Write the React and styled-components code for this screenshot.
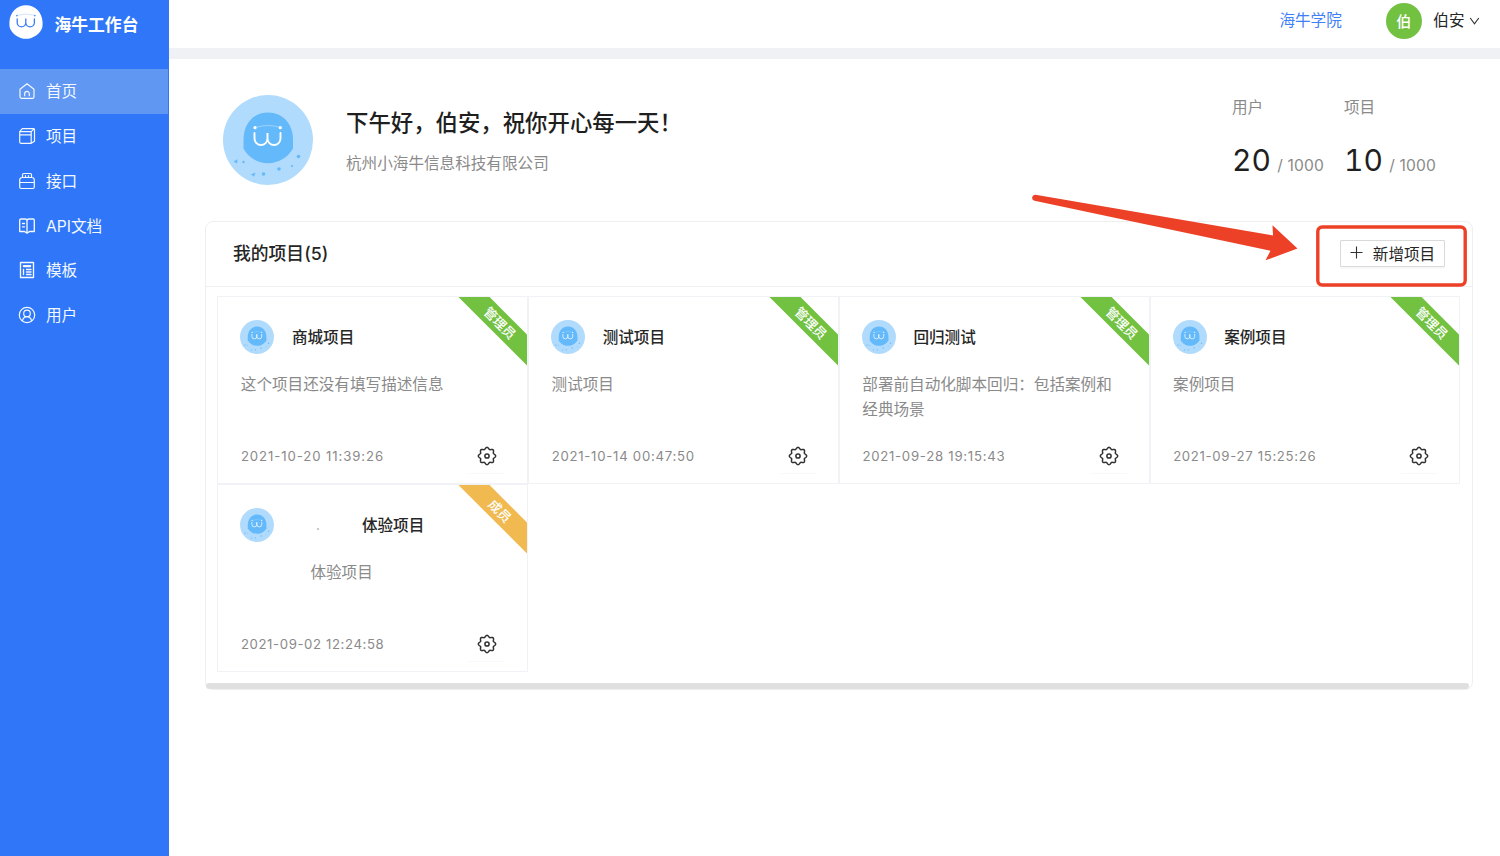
import React from 'react';
import styled, { createGlobalStyle } from 'styled-components';

const GlobalStyle = createGlobalStyle`
  * { box-sizing: border-box; }
  html, body { margin: 0; padding: 0; background: #fff; }
  body {
    font-family: Inter, "Noto Sans CJK SC", sans-serif;
    font-size: 15.6px;
    color: #262626;
    overflow: hidden;
  }
`;

const Page = styled.div`
  position: relative;
  display: flex;
  width: 1500px;
  height: 856px;
  overflow: hidden;
`;

const Sidebar = styled.aside`
  width: 169px;
  flex: none;
  background: #2f77f8;
  color: #fff;
`;

const Brand = styled.div`
  height: 69px;
  padding: 5px 0 0 8.5px;
  display: flex;
  align-items: flex-start;
`;

const BrandName = styled.div`
  margin-left: 12px;
  font-size: 16.8px;
  font-weight: 700;
  line-height: 40px;
  white-space: nowrap;
`;

const NavItem = styled.div`
  height: 44.75px;
  width: 168px;
  display: flex;
  align-items: center;
  gap: 10px;
  padding: 0 0 0 18px;
  line-height: 24px;
  background: ${(p) => (p.$active ? '#5f97f3' : 'transparent')};
  color: #f4f8ff;
  svg { flex: none; }
  span { padding-top: 2px; }
`;

const Main = styled.main`
  flex: 1;
  display: flex;
  flex-direction: column;
`;

const TopBar = styled.header`
  height: 59px;
  border-bottom: 11px solid #f0f1f5;
  display: flex;
  justify-content: flex-end;
  align-items: flex-start;
  padding-right: 20.5px;
  line-height: 42px;
`;

const AcademyLink = styled.a`
  color: #3f80f7;
  margin-right: 44px;
`;

const UserBadge = styled.div`
  width: 36px;
  height: 36px;
  margin: 3px 11.5px 0 0;
  border-radius: 50%;
  background: #72c141;
  color: #fff;
  font-size: 15px;
  font-weight: 500;
  line-height: 37px;
  text-align: center;
`;

const UserName = styled.div`
  display: flex;
  align-items: center;
  gap: 4px;
`;

const Welcome = styled.section`
  height: 162px;
  display: flex;
  padding: 36px 63px 0 53.5px;
`;

const Greeting = styled.div`
  flex: 1;
  margin-left: 33.5px;
`;

const Hello = styled.h1`
  margin: 11px 0 0;
  font-size: 22.4px;
  font-weight: 500;
  line-height: 34px;
  color: #1f1f1f;
`;

const Company = styled.p`
  margin: 12px 0 0;
  line-height: 24px;
  color: #8a8a8a;
`;

const Stat = styled.div`
  margin-left: ${(p) => p.$gap || 0}px;
  width: 93px;
  color: #8a8a8a;
  white-space: nowrap;
`;

const StatLabel = styled.div`
  padding-top: 1px;
  line-height: 24px;
`;

const StatValue = styled.div`
  margin-top: 20px;
  line-height: 40px;
  letter-spacing: 0.15px;
  b {
    font-size: 30px;
    font-weight: 400;
    font-variant-numeric: tabular-nums;
    color: #1f1f1f;
    margin-right: 6px;
  }
`;

const Panel = styled.section`
  width: 1268px;
  height: 469px;
  margin-left: 36px;
  border: 1px solid #efeff1;
  border-radius: 8px;
  display: flex;
  flex-direction: column;
`;

const PanelHead = styled.div`
  height: 65px;
  flex: none;
  display: flex;
  justify-content: space-between;
  align-items: center;
  padding: 0 27px 3px;
  border-bottom: 1px solid #efeff1;
`;

const PanelTitle = styled.h2`
  margin: 0 0 2px;
  font-size: 17.8px;
  font-weight: 500;
`;

const AddButton = styled.button`
  width: 105px;
  height: 27px;
  margin-top: 2px;
  padding: 0;
  border: 1px solid #d9d9d9;
  border-radius: 1px;
  background: #fff;
  box-shadow: 0 2px 1px rgba(0, 0, 0, 0.03);
  font: inherit;
  line-height: 24px;
  color: #262626;
  display: flex;
  align-items: center;
  justify-content: center;
  gap: 10px;
  white-space: nowrap;
  svg { margin-bottom: 2px; }
  span { padding-top: 2px; }
`;

const CardGrid = styled.div`
  flex: 1;
  display: grid;
  grid-template-columns: repeat(4, 310.75px);
  grid-auto-rows: 188px;
  padding: 9px 0 0 11.4px;
`;

const Card = styled.article`
  position: relative;
  overflow: hidden;
  border: 1px solid #f0f2f5;
  padding: 22px 22px 0;
  display: flex;
  flex-direction: column;
`;

const CardHead = styled.div`
  display: flex;
  align-items: center;
  height: 36px;
`;

const CardTitle = styled.h3`
  margin: 0 0 0 ${(p) => (p.$shift ? 42.5 : 17.5)}px;
  padding-top: 2px;
  font-size: 15.6px;
  font-weight: 500;
  line-height: 24px;
`;

const Speck = styled.span`
  width: 2px;
  height: 2px;
  margin: 8px 0 0 43px;
  background: #c9c9c9;
`;

const CardText = styled.p`
  margin: 18px 0 0;
  padding-left: ${(p) => (p.$shift ? 70 : 0.4)}px;
  height: 50px;
  width: 256px;
  line-height: 24.5px;
  color: #8a8a8a;
`;

const CardFoot = styled.div`
  margin-top: 16px;
  height: 36px;
  display: flex;
  justify-content: space-between;
  color: #8a8a8a;
`;

const Time = styled.time`
  padding-left: 0.5px;
  font-size: 13.2px;
  letter-spacing: ${(p) => p.$track}px;
  line-height: 35px;
`;

const Settings = styled.div`
  width: 36px;
  height: 35px;
  padding-bottom: 1px;
  border-bottom: 1px solid #f8f8f8;
  display: flex;
  align-items: center;
  justify-content: center;
`;

const Ribbon = styled.div`
  position: absolute;
  top: 15px;
  right: -33px;
  width: 120px;
  height: 22px;
  transform: rotate(45deg);
  background: ${(p) => (p.$member ? '#f1ba50' : '#72c141')};
  color: #fff;
  font-size: 13px;
  font-weight: 500;
  line-height: 22px;
  text-align: center;
`;

const ScrollBar = styled.div`
  height: 6px;
  width: 1263px;
  flex: none;
  border-radius: 3px;
  background: #e0e0e0;
`;

const Annotation = styled.svg`
  position: absolute;
  left: 1020px;
  top: 180px;
  pointer-events: none;
`;

const Stroke = ({ children, size = 18 }) => (
  <svg width={size} height={size} viewBox="0 0 18 18" fill="none" stroke="currentColor" strokeWidth="1.2" strokeLinejoin="round" strokeLinecap="round">
    {children}
  </svg>
);

const icons = {
  home: (
    <Stroke>
      <path d="M2 7.200 9 1.800l7 5.400v7.600a1.600 1.600 0 0 1-1.600 1.600H3.600A1.600 1.600 0 0 1 2 14.800zM6.700 13.700v-2a2.300 2.300 0 0 1 4.600 0v2" />
    </Stroke>
  ),
  project: (
    <Stroke>
      <path d="M1.700 4.600h11.500v11.700H2.900a1.200 1.200 0 0 1-1.200-1.200zM1.700 4.600l2.600-2.900h11.100a1.100 1.100 0 0 1 1.100 1.100v11.400l-3.300 2.100M13.200 4.600l2.900-2.700M1.700 7.800h11.500" />
    </Stroke>
  ),
  api: (
    <Stroke>
      <path d="M4.200 5.500h9.600a2.500 2.500 0 0 1 2.500 2.500v7a1.500 1.500 0 0 1-1.500 1.500H3.200A1.500 1.500 0 0 1 1.700 15V8a2.500 2.500 0 0 1 2.500-2.500zM1.700 10.500h14.600M4.500 5.500V2.800a1.300 1.300 0 0 1 1.300-1.300h6.400a1.300 1.300 0 0 1 1.300 1.300v2.700M7.500 3.500v2M10.500 3.500v2" />
    </Stroke>
  ),
  docs: (
    <Stroke>
      <path d="M9 4v10.500M9 4c0-1.300-.8-2-1.800-2H2.900a1.200 1.200 0 0 0-1.200 1.200v11.300H6.500l2.500 1.600 2.500-1.600h4.800V3.200A1.200 1.200 0 0 0 15.100 2h-4.300C9.800 2 9 2.700 9 4M4.500 6.500h2M4.500 9.800h2" strokeWidth="1.350" />
    </Stroke>
  ),
  template: (
    <Stroke>
      <path d="M2.500 1.500h13v15h-13zM5.500 8.500v5M8.500 8.500H13M8.500 11H13M8.500 13.500H13" strokeWidth="1.350" />
      <path d="M5.500 4.600h7v1h-7z" />
    </Stroke>
  ),
  user: (
    <Stroke>
      <circle cx="9" cy="9" r="7.7" />
      <circle cx="9" cy="7.4" r="3.3" />
      <path d="M4.400 14.800c.6-2.400 2.200-4.100 4.600-4.100s4 1.700 4.600 4.100" />
    </Stroke>
  ),
};

const gearPath = (() => {
  const points = [];
  for (let i = 0; i < 160; i += 1) {
    const a = (i / 160) * Math.PI * 2;
    const r = 7.8 + 0.85 * Math.cos(8 * a);
    points.push(`${(10 + r * Math.sin(a)).toFixed(2)} ${(10 - r * Math.cos(a)).toFixed(2)}`);
  }
  return `M${points.join('L')}Z`;
})();

const Gear = () => (
  <svg width="20" height="20" viewBox="0 0 20 20" fill="none" stroke="#303030" strokeWidth="1.500">
    <path d={gearPath} />
    <circle cx="10" cy="10" r="2.1" />
  </svg>
);

const Logo = () => (
  <svg width="34" height="34" viewBox="0 0 34 34" fill="none">
    <path d="M17 .2C8 .2.7 7.2.4 17.5c0 3 0 5.3 1.3 7.2 3 5.300 9 9.100 15.300 9.100s12.300-3.800 15.300-9.100c1.300-1.900 1.300-4.200 1.300-7.200C33.300 7.200 26 .2 17 .2z" fill="#fff" />
    <path d="M8.200 13.800v3.700a4.300 4.300 0 0 0 8.600 0V13.500v4a4.300 4.300 0 0 0 8.600 0V13.800" stroke="#3b7df5" strokeWidth="1.300" strokeLinecap="round" />
    <path d="M8 10.300q9-2.500 17.500 0" stroke="#b8d0fb" strokeWidth=".6" />
    <circle cx="7.900" cy="10.600" r=".9" fill="#5b93f7" />
    <circle cx="25.800" cy="10.600" r=".9" fill="#5b93f7" />
  </svg>
);

const MascotSvg = styled.svg`
  flex: none;
`;

const Mascot = ({ size }) => (
  <MascotSvg width={size} height={size} viewBox="0 0 90 90" fill="none">
    <circle cx="45" cy="45" r="45" fill="#b1dbfc" />
    <path d="M45 17.500C30 17.500 20.500 29 20.500 45v8.500C25 62 34 68.200 45 68.200S65 62 70 53.500V45C70 29 60 17.500 45 17.500z" fill="#64b9fb" />
    <path d="M31.500 38v5.500a6.400 6.400 0 0 0 13 0V38v5.500a6.400 6.400 0 0 0 13 0V38" stroke="#fff" strokeWidth="1.900" strokeLinecap="round" />
    <path d="M33 32.300q12-3.500 24 0" stroke="#a9d9fd" strokeWidth=".8" />
    <circle cx="32" cy="32.700" r="1.600" fill="#fff" />
    <circle cx="57.300" cy="32.700" r="1.600" fill="#fff" />
    <g fill="#64b9fb">
      <circle cx="75.500" cy="61.500" r="1.800" />
      <circle cx="69" cy="71" r="1.100" />
      <circle cx="56" cy="74" r="1.800" />
      <circle cx="40.500" cy="79" r="1.800" />
      <circle cx="20.500" cy="67" r="1.200" />
      <path d="m10.500 66.500 4-2.300-.4 4.300zM28 79.200l4.500-1.500-1.500 4z" />
    </g>
  </MascotSvg>
);

const nav = [
  ['home', '首页'],
  ['project', '项目'],
  ['api', '接口'],
  ['docs', 'API文档'],
  ['template', '模板'],
  ['user', '用户'],
];

const projects = [
  { name: '商城项目', text: '这个项目还没有填写描述信息', time: '2021-10-20 11:39:26', track: 0.9 },
  { name: '测试项目', text: '测试项目', time: '2021-10-14 00:47:50', track: 0.73 },
  { name: '回归测试', text: '部署前自动化脚本回归：包括案例和经典场景', time: '2021-09-28 19:15:43', track: 0.73 },
  { name: '案例项目', text: '案例项目', time: '2021-09-27 15:25:26', track: 0.67 },
  { name: '体验项目', text: '体验项目', time: '2021-09-02 12:24:58', track: 0.6, member: true },
];

export default function App() {
  return (
    <Page>
      <GlobalStyle />
      <Sidebar>
        <Brand>
          <Logo />
          <BrandName>海牛工作台</BrandName>
        </Brand>
        {nav.map(([icon, label], i) => (
          <NavItem key={icon} $active={i === 0}>
            {icons[icon]}
            <span>{label}</span>
          </NavItem>
        ))}
      </Sidebar>
      <Main>
        <TopBar>
          <AcademyLink>海牛学院</AcademyLink>
          <UserBadge>伯</UserBadge>
          <UserName>
            伯安
            <svg width="11" height="8" viewBox="0 0 11 8" fill="none" stroke="#303030" strokeWidth="1.100">
              <path d="m1.200 1 4.300 5.800L9.800 1" />
            </svg>
          </UserName>
        </TopBar>
        <Welcome>
          <Mascot size={90} />
          <Greeting>
            <Hello>下午好，伯安，祝你开心每一天！</Hello>
            <Company>杭州小海牛信息科技有限公司</Company>
          </Greeting>
          <Stat>
            <StatLabel>用户</StatLabel>
            <StatValue><b>20</b>/ 1000</StatValue>
          </Stat>
          <Stat $gap={19}>
            <StatLabel>项目</StatLabel>
            <StatValue><b>10</b>/ 1000</StatValue>
          </Stat>
        </Welcome>
        <Panel>
          <PanelHead>
            <PanelTitle>我的项目(5)</PanelTitle>
            <AddButton>
              <svg width="13" height="13" viewBox="0 0 13 13" stroke="#303030" strokeWidth="1.100">
                <path d="M.5 6.500h12M6.500.5v12" />
              </svg>
              <span>新增项目</span>
            </AddButton>
          </PanelHead>
          <CardGrid>
            {projects.map((p) => (
              <Card key={p.time}>
                <CardHead>
                  <Mascot size={34} />
                  {p.member && <Speck />}
                  <CardTitle $shift={p.member}>{p.name}</CardTitle>
                </CardHead>
                <CardText $shift={p.member}>{p.text}</CardText>
                <CardFoot>
                  <Time $track={p.track}>{p.time}</Time>
                  <Settings><Gear /></Settings>
                </CardFoot>
                <Ribbon $member={p.member}>{p.member ? '成员' : '管理员'}</Ribbon>
              </Card>
            ))}
          </CardGrid>
          <ScrollBar />
        </Panel>
      </Main>
      <Annotation width="460" height="115" viewBox="0 0 460 115">
        <path d="M15.500 14.700 253 55.500 252.500 45.300 277.500 68.600 245.500 80.300 250.500 70.700 14.500 20.800A3.100 3.100 0 0 1 15.500 14.700z" fill="#ec4127" />
        <rect x="297.800" y="47" width="147.400" height="58" rx="4.500" fill="none" stroke="#ec4127" strokeWidth="3.400" />
      </Annotation>
    </Page>
  );
}
